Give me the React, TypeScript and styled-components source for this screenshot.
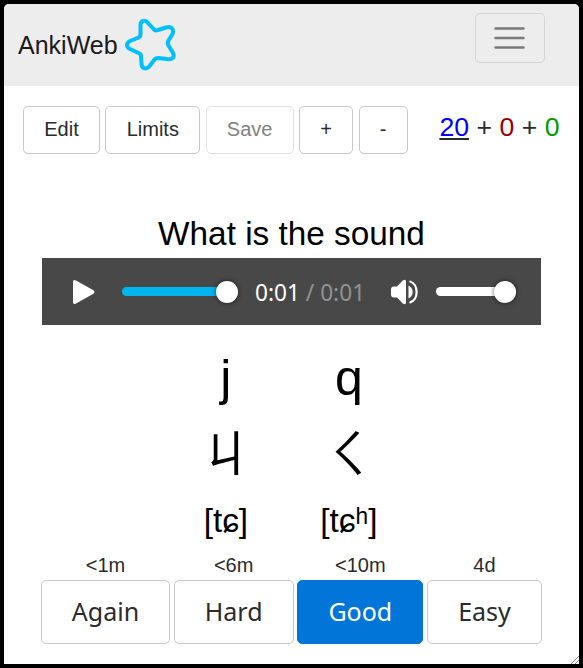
import React from "react";
import styled, { createGlobalStyle } from "styled-components";

const GlobalStyle = createGlobalStyle`
  * { box-sizing: border-box; }
  body { margin: 0; background: #000; font-family: "Liberation Sans", Arial, sans-serif; }
`;

const Desktop = styled.div`
  width: 583px;
  height: 668px;
  padding: 4px;
  background: #000;
`;

const Window = styled.main`
  position: relative;
  width: 575px;
  height: 660px;
  display: flex;
  flex-direction: column;
  overflow: hidden;
  background: #fff;
  border-radius: 5px 5px 0 0;
  color: #292b2c;
`;

const NavBar = styled.header`
  height: 82px;
  flex: none;
  display: flex;
  align-items: flex-start;
  justify-content: space-between;
  padding: 9px 34px 0 14px;
  background: #ededed;
`;

const Brand = styled.div`
  display: flex;
  align-items: center;
  gap: 6px;
  height: 64px;
  font-size: 25px;
  color: #1a1a1a;
`;

const MenuButton = styled.button`
  width: 70px;
  height: 50px;
  padding: 0;
  display: flex;
  align-items: center;
  justify-content: center;
  background: transparent;
  border: 1px solid #d5d5d5;
  border-radius: 5px;
`;

const Toolbar = styled.div`
  display: flex;
  gap: 5.33px;
  height: 48px;
  margin: 20px 19.5px 0 19px;
`;

const ToolButton = styled.button<{ $width: number; $dim?: boolean }>`
  width: ${(p) => p.$width}px;
  flex: none;
  height: 48px;
  padding: 0 0 2px;
  font: 20px "Liberation Sans", Arial, sans-serif;
  color: ${(p) => (p.$dim ? "#7f8080" : "#292b2c")};
  background: #fff;
  border: 1px solid ${(p) => (p.$dim ? "#e0e0e0" : "#c8c8c8")};
  border-radius: 5px;
`;

const Counts = styled.div`
  margin-left: auto;
  height: 42px;
  line-height: 42px;
  font-size: 26.67px;
  white-space: pre;
`;

const Count = styled.span<{ $color: string }>`
  color: ${(p) => p.$color};
`;

const Current = styled.u`
  text-decoration-color: #292b2c;
`;

const Question = styled.h1`
  margin: 60px 0 0;
  height: 44px;
  line-height: 40px;
  font-size: 33.33px;
  font-weight: 400;
  text-align: center;
  color: #000;
`;

const Player = styled.section`
  display: flex;
  align-items: center;
  width: 499px;
  height: 67px;
  margin: 0 0 0 38px;
  padding-left: 30px;
  background: #484848;
`;

const Slider = styled.div<{ $width: number; $left: number; $color: string }>`
  display: flex;
  align-items: center;
  justify-content: flex-end;
  width: ${(p) => p.$width}px;
  height: 9px;
  margin-left: ${(p) => p.$left}px;
  border-radius: 5px;
  background: ${(p) => p.$color};
`;

const Thumb = styled.div`
  width: 22px;
  height: 22px;
  flex: none;
  border-radius: 50%;
  background: #fff;
  box-shadow: 0 0 5px rgba(0, 0, 0, 0.6);
`;

const Time = styled.div`
  width: 135px;
  margin-left: 17px;
  padding-top: 2px;
  font: 22.67px "Noto Sans", sans-serif;
  color: #929292;
  white-space: nowrap;
`;

const Elapsed = styled.span`
  color: #fff;
`;

const Sounds = styled.div`
  display: grid;
  grid-template-columns: 123px 123px;
  grid-template-rows: 77px 73px 61px;
  margin: 16px 0 0 160.4px;
  color: #000;
  text-align: center;
`;

const Symbol = styled.div<{ $small?: boolean }>`
  line-height: ${(p) => (p.$small ? 60 : 75)}px;
  font-size: ${(p) => (p.$small ? 33.33 : 50)}px;
  font-family: "Liberation Sans", "Noto Sans CJK SC", sans-serif;
  white-space: nowrap;
`;

const Answers = styled.div`
  display: flex;
  gap: 3.67px;
  margin: 0 0 0 37px;
`;

const Answer = styled.div`
  display: flex;
  flex-direction: column;
  align-items: center;
`;

const Interval = styled.div`
  height: 28px;
  line-height: 26px;
  font-size: 20px;
`;

const AnswerButton = styled.button<{ $width: number; $primary?: boolean }>`
  width: ${(p) => p.$width}px;
  height: 64px;
  padding: 0 0 2px;
  font: 25px "Noto Sans", sans-serif;
  color: ${(p) => (p.$primary ? "#fff" : "#292b2c")};
  background: ${(p) => (p.$primary ? "#0275d8" : "#fff")};
  border: 1px solid ${(p) => (p.$primary ? "#0275d8" : "#c8c8c8")};
  border-radius: 5px;
`;

const Grip = styled.svg`
  position: absolute;
  right: 0;
  bottom: 0;
`;

const answers = [
  { interval: "<1m", label: "Again", width: 129 },
  { interval: "<6m", label: "Hard", width: 120 },
  { interval: "<10m", label: "Good", width: 126, primary: true },
  { interval: "4d", label: "Easy", width: 115 },
];

const symbols = ["j", "q", "ㄐ", "ㄑ"];
const phonetics = ["[tɕ]", "[tɕʰ]"];

export default function App() {
  return (
    <Desktop>
      <GlobalStyle />
      <Window>
        <NavBar>
          <Brand>
            <span>AnkiWeb</span>
            <svg width="53" height="54" viewBox="0 0 53 54" fill="none" stroke="#00bfff" strokeWidth="4" strokeLinejoin="round">
              <path d="M16.5 7C16.5 3 21 1 24 5L30 11.5Q31.5 13 34 12L42 9.5C47 8 50.5 11 48.5 16L44.5 22.5Q43 25 44.5 27.5L49 35C51 39 48.5 42 43 41L34 40Q32 40 30.5 41.5L26 47.5C23 52 18 51 17.5 46L17 38Q17 36 14.5 35L6 31C2 29 2 25 6 23L13.5 20Q16.5 19 16.5 16.5Z" />
            </svg>
          </Brand>
          <MenuButton aria-label="Menu">
            <svg width="32" height="24" viewBox="0 0 32 24" stroke="#7a7878" strokeWidth="2.5" strokeLinecap="round">
              <path d="M1.5 2.5H29.5M1.5 12H29.5M1.5 21.5H29.5" />
            </svg>
          </MenuButton>
        </NavBar>
        <Toolbar>
          <ToolButton $width={77}>Edit</ToolButton>
          <ToolButton $width={95}>Limits</ToolButton>
          <ToolButton $width={88} $dim>Save</ToolButton>
          <ToolButton $width={54.33}>+</ToolButton>
          <ToolButton $width={49}>-</ToolButton>
          <Counts>
            <Current><Count $color="#00f">20</Count></Current>
            {" + "}
            <Count $color="#900">0</Count>
            {" + "}
            <Count $color="#090">0</Count>
          </Counts>
        </Toolbar>
        <Question>What is the sound</Question>
        <Player>
          <svg width="24" height="26" viewBox="0 0 24 26" fill="#fff">
            <path d="M1 3Q1 0 4 1.5L21 11Q24 13 21 15L4 24.5Q1 26 1 23Z" />
          </svg>
          <Slider $width={116} $left={26} $color="#00b6f0"><Thumb /></Slider>
          <Time><Elapsed>0:01</Elapsed> / 0:01</Time>
          <svg width="28" height="26" viewBox="0 0 28 26" fill="#fff">
            <path d="M4 7.5H7L12.5 1.8Q16 -1 16 3V23Q16 27 12.5 24.2L7 18.5H4Q1 18.5 1 15.5V10.5Q1 7.5 4 7.5Z" />
            <path d="M18.5 6.5C24 9 24 17 18.5 19.5Z" />
            <path d="M19.5 2.2C29 5 29 21 19.5 23.8" fill="none" stroke="#fff" strokeWidth="2.2" />
          </svg>
          <Slider $width={80} $left={18} $color="#fff"><Thumb /></Slider>
        </Player>
        <Sounds lang="zh">
          {symbols.map((s) => <Symbol key={s}>{s}</Symbol>)}
          {phonetics.map((s) => <Symbol key={s} $small>{s}</Symbol>)}
        </Sounds>
        <Answers>
          {answers.map((a) => (
            <Answer key={a.label}>
              <Interval>{a.interval}</Interval>
              <AnswerButton $width={a.width} $primary={a.primary}>{a.label}</AnswerButton>
            </Answer>
          ))}
        </Answers>
        <Grip width="8" height="8" stroke="#888" strokeWidth="1">
          <path d="M0 8L8 0M4 8L8 4" />
        </Grip>
      </Window>
    </Desktop>
  );
}
